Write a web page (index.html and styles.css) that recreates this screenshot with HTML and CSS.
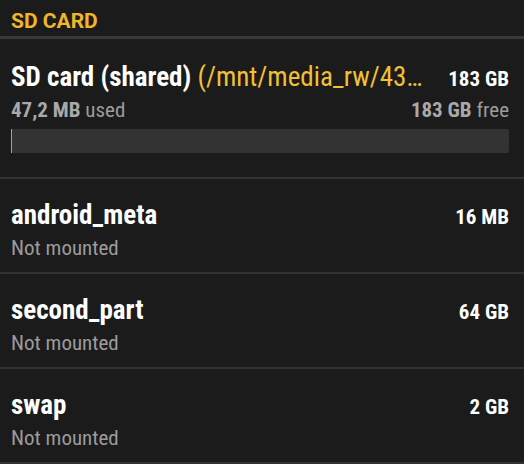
FILE: index.html
```html
<!DOCTYPE html>
<html>
<head>
<meta charset="utf-8">
<link rel="stylesheet" href="styles.css">
</head>
<body>
<div class="screen">
  <div class="section-header">SD CARD</div>
  <div class="row row-main">
    <div class="line1">
      <div class="title"><span class="name">SD card (shared)</span> <span class="path">(/mnt/media_rw/43…</span></div>
      <div class="size">183 GB</div>
    </div>
    <div class="line2">
      <div class="sub"><b>47,2 MB</b> used</div>
      <div class="sub"><b>183 GB</b> free</div>
    </div>
    <div class="bar"><div class="bar-fill" style="width:1px"></div></div>
  </div>
  <div class="row">
    <div class="line1">
      <div class="title"><span class="name">android_meta</span></div>
      <div class="size">16 MB</div>
    </div>
    <div class="line2"><div class="sub">Not mounted</div></div>
  </div>
  <div class="row">
    <div class="line1">
      <div class="title"><span class="name">second_part</span></div>
      <div class="size">64 GB</div>
    </div>
    <div class="line2"><div class="sub">Not mounted</div></div>
  </div>
  <div class="row">
    <div class="line1">
      <div class="title"><span class="name">swap</span></div>
      <div class="size">2 GB</div>
    </div>
    <div class="line2"><div class="sub">Not mounted</div></div>
  </div>
</div>
</body>
</html>
```

FILE: styles.css
```css
html, body {
  margin: 0;
  padding: 0;
  background: #1b1b1b;
}
.screen {
  width: 524px;
  height: 464px;
  overflow: hidden;
  background: #1b1b1b;
  font-family: Roboto, "Liberation Sans", sans-serif;
  font-stretch: 80%;
  color: #ffffff;
}
.section-header {
  height: 36px;
  box-sizing: border-box;
  padding: 9px 15px 0 11px;
  font-size: 21px;
  font-weight: 700;
  font-stretch: 92%;
  color: #f0b52a;
  line-height: 24px;
  border-bottom: 3px solid #383838;
  box-sizing: content-box;
  height: 27px;
}
.row {
  padding: 21px 15px 12px 11px;
  border-bottom: 2px solid #323232;
  display: flex;
  flex-direction: column;
}
.row-main {
  padding-top: 23px;
  padding-bottom: 24px;
}
.line1 {
  display: flex;
  justify-content: space-between;
  align-items: baseline;
}
.title {
  font-size: 27px;
  line-height: 30px;
  white-space: nowrap;
}
.name {
  font-weight: 700;
}
.path {
  color: #f2c035;
  font-weight: 400;
}
.size {
  font-size: 21px;
  font-weight: 700;
}
.line2 {
  display: flex;
  justify-content: space-between;
  margin-top: 6px;
}
.sub {
  font-size: 21px;
  line-height: 24px;
  color: #9c9c9c;
}
.sub b {
  font-weight: 700;
  color: #a9a9a9;
}
.bar {
  margin-top: 7px;
  height: 24px;
  background: #333333;
  border-radius: 2px;
  display: flex;
}
.bar-fill {
  background: #d4a02a;
}
```
